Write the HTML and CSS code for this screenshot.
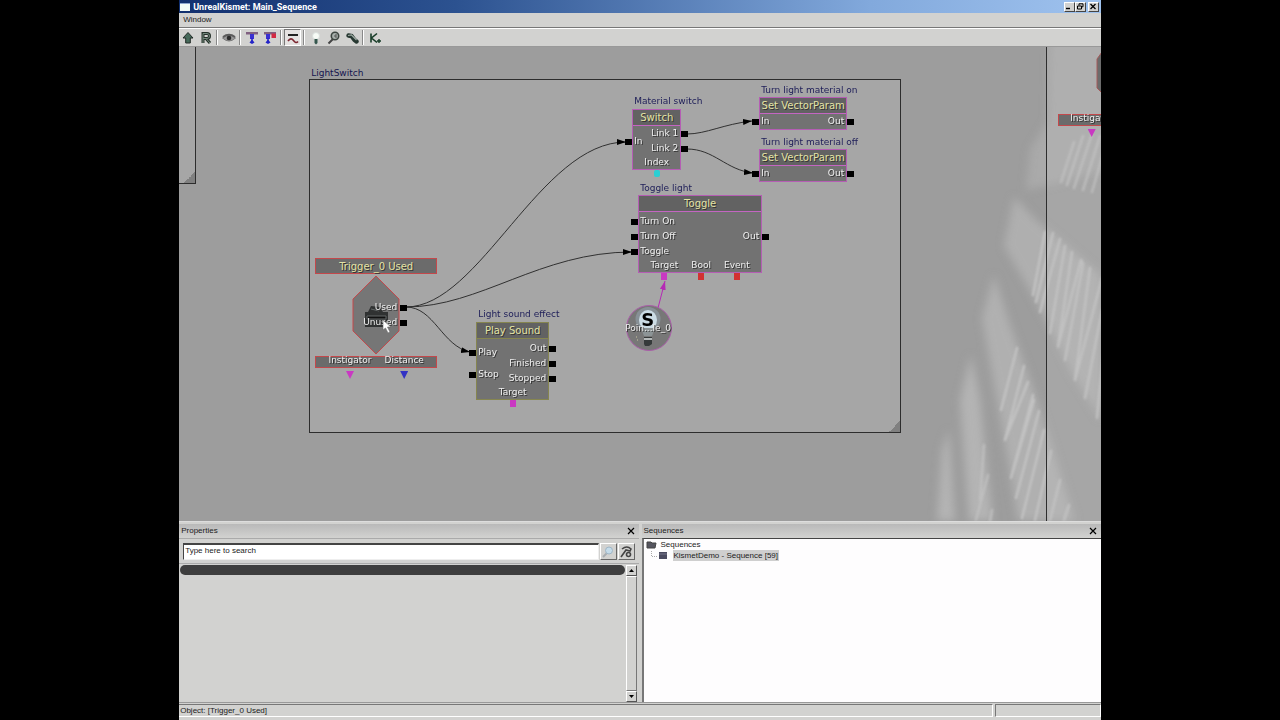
FILE: index.html
```html
<!DOCTYPE html>
<html lang="en">
<head>
<meta charset="utf-8">
<title>UnrealKismet: Main_Sequence</title>
<link rel="stylesheet" href="styles.css">
</head>
<body>
<div class="app">
  <header class="titlebar">
    <span class="app-icon"></span>
    <h1 class="title">UnrealKismet: Main_Sequence</h1>
    <div class="window-buttons">
      <button class="win-btn" aria-label="Minimize"><svg width="8" height="7"><path d="M1 5.5h4" stroke="#000" stroke-width="1.4"/></svg></button>
      <button class="win-btn" aria-label="Restore"><svg width="8" height="7" fill="none" stroke="#000"><path d="M3 2.500V.8h4v3H5.500M1.500 3h4v3h-4z"/></svg></button>
      <button class="win-btn win-close" aria-label="Close"><svg width="8" height="7"><path d="M1.500 1l5 5M6.500 1l-5 5" stroke="#000" stroke-width="1.300"/></svg></button>
    </div>
  </header>
  <nav class="menubar"><button class="menu-item">Window</button></nav>
  <div class="toolbar">
    <button class="tool" aria-label="Parent sequence"><svg width="14" height="14"><path d="M7 1.500L12 7H9.300v5H4.700V7H2z" fill="#466a5a" stroke="#222b27"/></svg></button>
    <button class="tool" aria-label="Rename sequence"><svg width="14" height="14" fill="none"><path d="M4 12V2.500h4q2.500 0 2.500 2.500T8 7.500H4M7 7.500l4 4.500" stroke="#243029" stroke-width="3"/><path d="M4 12V2.500h4q2.500 0 2.500 2.500T8 7.500H4M7 7.500l4 4.500" stroke="#71877b"/></svg></button>
    <span class="sep"></span>
    <button class="tool" aria-label="Hide connectors"><svg width="16" height="14"><path d="M1.500 7q6.500-6 13 0q-6.500 6-13 0z" fill="#999" stroke="#777"/><path d="M2 6q6-4.500 12 0" fill="none" stroke="#5c5c5c" stroke-width="2"/><circle cx="8" cy="7" r="2.300" fill="#2c2c2c"/></svg></button>
    <span class="sep"></span>
    <button class="tool" aria-label="Show all connectors"><svg width="14" height="14"><path d="M1 1h12v2.500H1z" fill="#806080"/><path d="M7 3v5" stroke="#3a30d0" stroke-width="4"/><path d="M7 7v4" stroke="#2b22d0" stroke-width="1.500"/><path d="M4.500 11.500L7 8.500l2.500 3L7 13z" fill="#2424c8"/></svg></button>
    <button class="tool" aria-label="Hide unused connectors"><svg width="14" height="14"><path d="M1 1h12v2.500H1z" fill="#806080"/><path d="M5 3v5" stroke="#3a30d0" stroke-width="4"/><path d="M5 7v4" stroke="#2b22d0" stroke-width="1.500"/><path d="M2.500 11.500L5 8.500l2.500 3L5 13z" fill="#2424c8"/><path d="M8.500 2.500h4.500V7H8.500z" fill="#d32942"/></svg></button>
    <span class="sep"></span>
    <button class="tool pressed" aria-label="Curved connections" aria-pressed="true"><svg width="14" height="14" fill="none"><path d="M2 4h10" stroke="#222" stroke-width="2"/><path d="M2 10q3-4 5.500-.5T12 10.500" stroke="#7d2731" stroke-width="1.600"/></svg></button>
    <span class="sep"></span>
    <button class="tool" aria-label="Search for object"><svg width="14" height="14"><circle cx="7" cy="5" r="3.500" fill="#f7fbf6" stroke="#d8dedb"/><path d="M5.500 8h3v4l-1.500 1.500L5.500 12z" fill="#34564d"/></svg></button>
    <button class="tool" aria-label="Find"><svg width="14" height="14"><path d="M6 8l-4.500 4.500" stroke="#444" stroke-width="2"/><circle cx="8" cy="5" r="3.700" fill="#a9b1ad" stroke="#3d4541" stroke-width="1.600"/><path d="M9 3v4M7 5h2" stroke="#555"/></svg></button>
    <button class="tool" aria-label="Update"><svg width="14" height="14" fill="none"><path d="M3.500 4.500l3 .5 3 4 2 1.500" stroke="#273831" stroke-width="4.400" stroke-linecap="round"/><path d="M3 4.500l3.500-.5 5 5" stroke="#9ca9a1" stroke-width="1.200"/></svg></button>
    <span class="sep"></span>
    <button class="tool" aria-label="Open new Kismet window"><svg width="14" height="14" fill="none" stroke="#173c27" stroke-width="1.600"><path d="M3 2.500v9M9 2.500L3.500 7 9 11.500"/><path d="M9 10h4M11 8v4" stroke-width="1.400"/></svg></button>
  </div>

  <main class="canvas">
    <svg class="backdrop" width="922" height="480" aria-hidden="true">
      <defs>
        <filter id="soft" x="-20%" y="-20%" width="140%" height="140%"><feGaussianBlur stdDeviation="4"/></filter>
        <filter id="fine" x="-10%" y="-10%" width="120%" height="120%"><feGaussianBlur stdDeviation="1"/></filter>
      </defs>
      <g transform="translate(-179 -47)">
        <g filter="url(#soft)" fill="#b4b4b4">
          <path d="M1050 40H1110V170L1062 182 1026 190 1030 150 1048 120z" opacity=".55"/>
          <path d="M1014 197L1036 220 1060 240 1101 275V420L1070 370 1045 318 1025 282 1004 246z" opacity=".8"/>
          <path d="M994 275L1010 325 1033 388 1050 440 1075 521H1018L1008 460 998 405 982 318z" opacity=".85"/>
          <path d="M971 355L980 400 986 460 993 521H969L960 400z"/>
          <path d="M949 430L955 521H937L942 450z"/>
        </g>
        <g filter="url(#fine)" fill="none" stroke="#c2c2c2" stroke-width="2.500" stroke-linecap="round" stroke-linejoin="round">
          <path d="M1045 232L1033 295M1053 233L1036 302M1060 239L1040 312M1065 246L1050 333M1072 252L1058 347 1081 260 1083 264 1065 360M1090 268L1075 380 1102 278M1102 310L1085 398M1103 355L1097 418"/>
          <path d="M1017 348L1001 410M1024 366L1005 440 1028 382M1033 395L1011 478 1034 400M1039 411L1016 498M1044 430L1022 518M1051 451L1035 520M1060 480L1050 520M1069 505L1064 520"/>
          <path d="M984 445L980 500M988 475L976 520M992 510L990 521M1074 142L1061 182M1083 136L1067 185M1092 134L1074 188M1100 136L1083 190M1103 154L1092 192" opacity=".8"/>
        </g>
      </g>
    </svg>
    <div class="group group-left"></div>
    <div class="group group-main"><span class="group-name">LightSwitch</span></div>
    <div class="group group-right"></div>

    <svg class="wires" width="922" height="474" aria-hidden="true">
      <defs>
        <marker id="arrow" markerUnits="userSpaceOnUse" markerWidth="10" markerHeight="8" refX="9" refY="3" orient="auto"><path d="M0 0L9 3L0 6z"/></marker>
        <marker id="arrow-pink" markerUnits="userSpaceOnUse" markerWidth="10" markerHeight="8" refX="9" refY="3" orient="auto"><path d="M0 0L9 3L0 6z" fill="#b52ab5"/></marker>
      </defs>
      <g transform="translate(-179 -47)" fill="none" stroke="#303030">
        <path d="M406 307C480 307 540 142 626 142" marker-end="url(#arrow)"/>
        <path d="M406 307C480 307 540 252 632 252" marker-end="url(#arrow)"/>
        <path d="M406 307C434 307 442 346 470 352" marker-end="url(#arrow)"/>
        <path d="M687 134C706 134 724 124 752 121" marker-end="url(#arrow)"/>
        <path d="M687 149C714 149 726 170 753 173" marker-end="url(#arrow)"/>
        <path d="M658 308L665 281" stroke="#b52ab5" marker-end="url(#arrow-pink)"/>
      </g>
    </svg>

    <section class="node switch">
      <span class="note">Material switch</span>
      <h2 class="node-title">Switch</h2>
      <div class="ports">
        <div class="ins"><span class="port">In</span></div>
        <div class="outs"><span class="port">Link 1</span><span class="port">Link 2</span></div>
      </div>
      <div class="vars"><span class="var cyan">Index</span></div>
    </section>

    <section class="node param param-on">
      <span class="note">Turn light material on</span>
      <h2 class="node-title">Set VectorParam</h2>
      <div class="ports">
        <div class="ins"><span class="port">In</span></div>
        <div class="outs"><span class="port">Out</span></div>
      </div>
    </section>

    <section class="node param param-off">
      <span class="note">Turn light material off</span>
      <h2 class="node-title">Set VectorParam</h2>
      <div class="ports">
        <div class="ins"><span class="port">In</span></div>
        <div class="outs"><span class="port">Out</span></div>
      </div>
    </section>

    <section class="node toggle">
      <span class="note">Toggle light</span>
      <h2 class="node-title">Toggle</h2>
      <div class="ports">
        <div class="ins"><span class="port">Turn On</span><span class="port">Turn Off</span><span class="port">Toggle</span></div>
        <div class="outs"><span class="port">Out</span></div>
      </div>
      <div class="vars"><span class="var pink">Target</span><span class="var red">Bool</span><span class="var red">Event</span></div>
    </section>

    <section class="node sound">
      <span class="note">Light sound effect</span>
      <h2 class="node-title">Play Sound</h2>
      <div class="ports">
        <div class="ins"><span class="port">Play</span><span class="port">Stop</span></div>
        <div class="outs"><span class="port">Out</span><span class="port">Finished</span><span class="port">Stopped</span></div>
      </div>
      <div class="vars"><span class="var pink">Target</span></div>
    </section>

    <section class="event">
      <h2 class="event-title">Trigger_0 Used</h2>
      <div class="event-body">
        <svg class="event-shape" width="48" height="80" aria-hidden="true">
          <path d="M24 1L47 24V56L24 79L1 56V24z" fill="#767676" stroke="#c3484b"/>
          <path d="M13 37h3l3-6 9 1 3 5h5v15H13z" fill="#303232"/>
          <path d="M15 41h19v3H15zM19 34l8 2" fill="#111" stroke="#626767"/>
        </svg>
        <div class="outs"><span class="port">Used</span><span class="port">Unused</span></div>
      </div>
      <div class="event-vars"><span class="var tri tri-pink">Instigator</span><span class="var tri tri-blue">Distance</span></div>
    </section>

    <section class="object">
      <svg class="object-art" width="48" height="48" aria-hidden="true">
        <circle cx="24" cy="24" r="22.500" fill="#777" stroke="#a95da8"/>
        <ellipse cx="23" cy="15" rx="12.500" ry="12" fill="#879096"/>
        <ellipse cx="23" cy="16" rx="9" ry="10" fill="#cbdce5"/>
        <path d="M16 24h14l-3 8h-8z" fill="#8c9496"/>
        <path d="M19 33h8v7l-3 2h-4l-1-2z" fill="#353a3a"/><path d="M19 34h8v2h-8z" fill="#b4b9b9"/>
        <path d="M11 33h1M12 36h1" stroke="#ccc6a0"/>
      </svg>
      <b class="object-badge">S</b>
      <span class="object-name">Poin...le_0</span>
    </section>

    <section class="event-clip"><span class="var tri tri-pink">Instigator</span></section>
    <svg class="hex-clip" width="6" height="44" aria-hidden="true"><path d="M6 1L1 8V37L6 42" fill="#6b6b6b" stroke="#a55a5a"/></svg>

    <svg class="cursor" width="12" height="15" aria-hidden="true"><path d="M1 1V11L3.500 9 6 14 8 13 5.500 8H9z" fill="#fff" stroke="#666" stroke-width=".6"/></svg>
  </main>

  <div class="panels">
    <section class="panel">
      <header class="panel-head"><h2 class="panel-title">Properties</h2><button class="close" aria-label="Close Properties"><svg width="8" height="8"><path d="M1 1l6 6M7 1L1 7" stroke="#000" stroke-width="1.200"/></svg></button></header>
      <div class="search-row">
        <input class="search" type="text" value="Type here to search" aria-label="Search properties">
        <button class="search-btn" aria-label="Search"><svg width="14" height="14"><path d="M6 8l-4 4" stroke="#a8adb0" stroke-width="2"/><circle cx="8" cy="5.500" r="3.500" fill="#c5dcea" stroke="#9fb6c6"/></svg></button>
        <button class="search-btn" aria-label="Options"><svg width="14" height="14" fill="none" stroke="#444"><path d="M3 4q5-4 9 0l-1 2-4-1-5 7" stroke-width="1.600"/><circle cx="9.500" cy="9.500" r="2" stroke-width="1.600"/></svg></button>
      </div>
      <div class="prop-area">
        <div class="prop-list"><div class="prop-bar"></div></div>
        <div class="scrollbar">
          <button class="scroll-btn" aria-label="Scroll up"><svg width="5" height="3"><path d="M0 3L2.500 0L5 3z"/></svg></button>
          <div class="scroll-track"></div>
          <button class="scroll-btn" aria-label="Scroll down"><svg width="5" height="3"><path d="M0 0L2.500 3L5 0z"/></svg></button>
        </div>
      </div>
    </section>
    <section class="panel">
      <header class="panel-head"><h2 class="panel-title">Sequences</h2><button class="close" aria-label="Close Sequences"><svg width="8" height="8"><path d="M1 1l6 6M7 1L1 7" stroke="#000" stroke-width="1.200"/></svg></button></header>
      <ul class="tree">
        <li class="tree-row"><svg width="11" height="8"><path d="M1 1h4l1 1h4l-1 5H1z" fill="#55555f" stroke="#444"/></svg><span class="tree-label">Sequences</span></li>
        <li class="tree-row child"><svg width="18" height="9"><path d="M1.500 0v5.500H8" fill="none" stroke="#aaa" stroke-dasharray="1 1"/><path d="M9 1h8v7H9z" fill="#4b4b60"/><path d="M9 3h8" stroke="#77778a"/></svg><span class="tree-label selected">KismetDemo - Sequence [59]</span></li>
      </ul>
    </section>
  </div>
  <footer class="statusbar"><span class="status-main">Object: [Trigger_0 Used]</span><span class="status-side"></span></footer>
</div>
</body>
</html>
```
FILE: styles.css
```css
* { box-sizing: border-box; }
body {
  margin: 0;
  padding: 0 14%;
  background: #000;
  color: #1c1c1c;
  font: 8px/12px "Liberation Sans", Arial, sans-serif;
}
h1, h2, ul { margin: 0; padding: 0; font-size: inherit; font-weight: normal; }
button { padding: 0; border: 0; background: none; color: inherit; font: inherit; }
svg { display: block; flex: none; }

.app { display: flex; flex-direction: column; min-height: 100vh; background: #d2d2d0; }

.titlebar {
  display: flex;
  align-items: center;
  gap: 3px;
  height: 13px;
  padding: 0 2px 0 1px;
  background: linear-gradient(90deg, #12306f, #2c5290 30%, #82a9dc 75%, #9fc2ee);
}
.app-icon { width: 10px; height: 8px; background: #f2fbf8; border-top: 1px solid #8da6cf; }
.title { flex: 1; color: #fff; font: bold 9px/12px Roboto, "Liberation Sans", sans-serif; }
.window-buttons { display: flex; }
.win-btn {
  display: grid;
  place-items: center;
  width: 11px;
  height: 10px;
  background: #d2d2d0;
  border: 1px solid;
  border-color: #fff #444 #444 #fff;
}
.win-close { margin-left: 2px; }

.menubar { height: 15px; padding: 1px 4px; border-bottom: 1px solid #777; }
.menu-item { display: block; }

.toolbar {
  display: flex;
  align-items: center;
  gap: 1px;
  height: 19px;
  border-top: 1px solid #fff;
  border-bottom: 1px solid #999;
}
.tool { display: grid; place-items: center; width: 17px; height: 17px; }
.pressed { background: #e5e2e1; border: 1px solid; border-color: #777 #fff #fff #777; }
.sep { width: 2px; height: 15px; margin: 0 1px; border-left: 1px solid #888; border-right: 1px solid #fff; }

/* Sequence canvas */
.canvas {
  position: relative;
  flex: 1 0 474px;
  overflow: hidden;
  background: #9d9d9d;
  font: 9px/12px "DejaVu Sans", Verdana, sans-serif;
}
.backdrop, .wires { position: absolute; left: 0; top: 0; }
.group { position: absolute; background: rgb(190 190 190 / 28%); border: 1px solid #2d2d2d; }
.group::after {
  content: "";
  position: absolute;
  right: 0;
  bottom: 0;
  width: 11px;
  height: 11px;
  background: linear-gradient(135deg, transparent 50%, #808080 50%);
}
.group-left { left: -2px; top: -2px; width: 19px; height: 139px; }
.group-main { left: 130px; top: 32px; width: 592px; height: 354px; }
.group-right { left: 867px; top: -2px; right: -20px; bottom: -20px; }
.group-name { position: absolute; bottom: 100%; left: 1px; margin-bottom: 1px; color: #15154f; }

.node {
  position: absolute;
  background: #727272;
  border: 1px solid #b55db4;
  color: #f0f0f0;
  text-shadow: 1px 1px 0 #333;
}
.node-title {
  height: 16px;
  background: #626262;
  border-bottom: 1px solid #c465c2;
  color: #e3e3a6;
  font-size: 10px;
  line-height: 15px;
  text-align: center;
  white-space: nowrap;
}
.note {
  position: absolute;
  bottom: 100%;
  left: 1px;
  margin-bottom: 3px;
  color: #1d1d58;
  text-shadow: none;
  white-space: nowrap;
}
.ports { display: flex; justify-content: space-between; padding: 1px 2px 0 1px; }
.ins, .outs { display: flex; flex-direction: column; justify-content: space-around; }
.outs { align-items: flex-end; }
.port { position: relative; height: 15px; line-height: 15px; white-space: nowrap; }
.port::before {
  content: "";
  position: absolute;
  top: 5px;
  width: 7px;
  height: 6px;
  background: #000;
}
.ins .port::before { right: 100%; margin-right: 2px; }
.outs .port::before { left: 100%; margin-left: 3px; }
.vars { display: flex; justify-content: center; gap: 13px; height: 13px; }
.var { position: relative; line-height: 12px; }
.var::after {
  content: "";
  position: absolute;
  left: 50%;
  top: 100%;
  width: 6px;
  height: 7px;
  margin: 1px 0 0 -3px;
  background: #c938c2;
}
.cyan::after { background: #2bcfd3; border-radius: 2px; }
.red::after { background: #d23232; }

.switch { left: 453px; top: 62px; width: 49px; }
.switch .ports { padding-top: 0; }
.param { left: 580px; width: 88px; }
.param-on { top: 50px; }
.param-off { top: 102px; }
.param .ports { padding-top: 0; }
.param .note, .toggle .note { margin-bottom: 2px; }
.toggle { left: 459px; top: 148px; width: 124px; }
.toggle .ports, .sound .ports { padding-top: 2px; }
.sound { left: 297px; top: 275px; width: 73px; border-color: #85854f; }
.sound .node-title { border-color: #85854f; }

.event { position: absolute; left: 136px; top: 211px; width: 122px; color: #f0f0f0; text-shadow: 1px 1px 0 #333; }
.event-title, .event-vars, .event-clip { background: #6b6b6b; border: 1px solid #c3484b; }
.event-title { height: 16px; color: #e3e3a6; font-size: 10px; line-height: 15px; text-align: center; }
.event-body { position: relative; width: 48px; height: 82px; margin: 0 auto; padding: 26px 3px 0 0; }
.event-shape { position: absolute; left: 0; top: 1px; }
.event-vars { display: flex; justify-content: center; gap: 13px; height: 12px; }
.event-vars .var, .event-clip .var { line-height: 6px; }
.var.tri::after {
  width: 8px;
  height: 8px;
  margin: 4px 0 0 -4px;
  background: #c938c2;
  clip-path: polygon(0 0, 100% 0, 50% 100%);
}
.var.tri-blue::after { background: #3232c4; }
.event-clip {
  position: absolute;
  display: flex;
  left: 879px;
  top: 67px;
  width: 122px;
  height: 12px;
  padding-left: 11px;
  color: #f0f0f0;
  text-shadow: 1px 1px 0 #333;
}
.hex-clip { position: absolute; left: 917px; top: 4px; }

.object { position: absolute; left: 446px; top: 257px; width: 48px; height: 48px; color: #eee; text-align: center; }
.object-art { position: absolute; left: 0; top: 0; }
.object-badge { position: absolute; left: 16px; top: 7px; color: #000; font: bold 18px/18px "DejaVu Sans", sans-serif; }
.object-name { position: absolute; left: 0; top: 18px; text-shadow: 1px 1px 0 #333; white-space: nowrap; }
.cursor { position: absolute; left: 203px; top: 272px; }

/* Docked panels */
.panels {
  display: grid;
  grid-template-columns: 1fr 1fr;
  gap: 3px;
  height: 181px;
  padding-top: 2px;
  border-top: 1px solid #ddd;
}
.panel { display: flex; flex-direction: column; min-width: 0; }
.panel-head {
  display: flex;
  justify-content: space-between;
  align-items: center;
  height: 14px;
  padding: 0 3px 0 2px;
  background: linear-gradient(#b9b9b9, #d2d2d0);
}
.close { display: grid; place-items: center; width: 10px; height: 10px; }
.search-row {
  display: flex;
  gap: 1px;
  height: 26px;
  padding: 4px 4px 3px;
  border-top: 1px solid #aaa;
  border-bottom: 1px solid #aaa;
}
.search {
  flex: 1;
  min-width: 0;
  height: 17px;
  padding: 0 0 3px 1px;
  border: 1px solid;
  border-color: #444 #eee #eee #444;
  border-top-width: 2px;
  background: #fff;
  color: #1c1c1c;
  font: inherit;
}
.search-btn { display: grid; place-items: center; width: 17px; height: 17px; background: #d2d2d0; border: 1px solid; border-color: #fff #666 #666 #fff; }
.prop-area { display: flex; flex: 1; padding: 1px 2px 0 1px; }
.prop-list { flex: 1; }
.prop-bar { height: 10px; border-radius: 5px; background: #3e3e3e; }
.scrollbar { display: flex; flex-direction: column; width: 11px; margin-left: 1px; }
.scroll-btn { display: grid; place-items: center; height: 11px; background: #d2d2d0; border: 1px solid; border-color: #fff #555 #555 #fff; }
.scroll-track { flex: 1; border: 1px solid; border-color: #fff #777 #777 #fff; }
.tree { flex: 1; padding: 0 2px; background: #fefdfe; border-top: 1px solid #444; border-left: 2px solid #777; list-style: none; }
.tree-row { display: flex; align-items: center; gap: 3px; height: 11px; }
.tree-label { line-height: 11px; padding: 0 1px; }
.child { gap: 5px; padding-left: 4px; }
.selected { background: #cfcfcf; }

.statusbar {
  display: flex;
  gap: 2px;
  height: 18px;
  padding: 1px 0 3px;
  border-top: 1px solid #999;
}
.status-main, .status-side { border-top: 1px solid #777; border-right: 1px solid #fff; border-bottom: 1px solid #fff; padding-left: 1px; }
.status-main { flex: 1; }
.status-side { width: 106px; border-left: 1px solid #777; }
```
